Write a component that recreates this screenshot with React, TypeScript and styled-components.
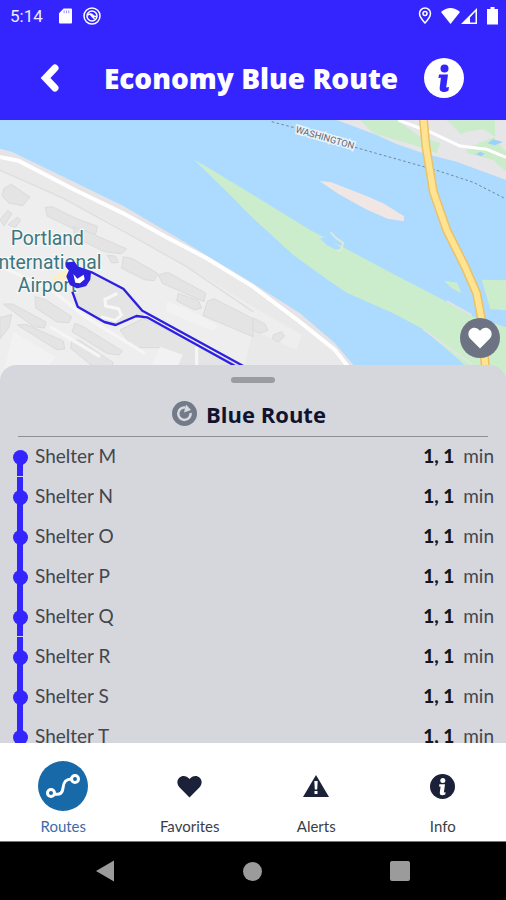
import React from "react";
import styled, { createGlobalStyle } from "styled-components";

const blue = "#3425ff";
const ink = "#1b2138";

const GlobalStyle = createGlobalStyle`
  *, *::before, *::after { box-sizing: border-box; }
  body { margin: 0; background: #000; font-family: Lato, "Open Sans", sans-serif; }
  button { border: 0; padding: 0; background: none; color: inherit; font: inherit; cursor: pointer; }
  svg { display: block; }
`;

const Screen = styled.div`
  display: flex;
  flex-direction: column;
  height: 100vh;
  overflow: hidden;
`;

const StatusBar = styled.div`
  display: flex;
  align-items: center;
  justify-content: space-between;
  flex: none;
  height: 32px;
  padding: 0 7px 0 10px;
  background: ${blue};
  color: #f0eeff;
  font: 400 17px/32px Roboto, sans-serif;
`;

const StatusGroup = styled.div<{ $gap: number }>`
  display: flex;
  align-items: center;
  gap: ${(p) => p.$gap}px;
`;

const Header = styled.header`
  display: grid;
  grid-template-columns: 1fr auto 1fr;
  align-items: center;
  flex: none;
  height: 88px;
  padding: 4px 42px 0 38px;
  background: ${blue};
  color: #fff;
`;

const Title = styled.h1`
  margin: 0;
  font: 800 28px/36px "Open Sans", sans-serif;
  white-space: nowrap;
`;

const HeaderButton = styled.button<{ $end?: boolean }>`
  justify-self: ${(p) => (p.$end ? "end" : "start")};
`;

const MapArea = styled.section`
  position: relative;
  flex: none;
  height: 264px;
  background: #acdbff;
`;

const MapDrawing = styled.svg`
  width: 100%;
  height: 100%;
`;

const FavoriteButton = styled.button`
  position: absolute;
  right: 6px;
  bottom: 26px;
  display: grid;
  place-items: center;
  width: 40px;
  height: 40px;
  border-radius: 50%;
  background: #6d7383;
`;

const Sheet = styled.section`
  position: relative;
  display: flex;
  flex-direction: column;
  flex: 1;
  min-height: 0;
  margin-top: -19px;
  border-radius: 16px 16px 0 0;
  background: #d5d7dd;
  overflow: hidden;
`;

const Handle = styled.div`
  flex: none;
  width: 44px;
  height: 6px;
  margin: 12px auto 0;
  border-radius: 3px;
  background: #9b9ca1;
`;

const RouteHeading = styled.div`
  display: flex;
  align-items: center;
  justify-content: center;
  gap: 9px;
  flex: none;
  height: 54px;
  margin: 0 18px;
  padding: 8px 8px 0 0;
  border-bottom: 1px solid #8a9098;
`;

const RouteName = styled.h2`
  margin: 0;
  color: #10132e;
  font: 700 22px/28px "Open Sans", sans-serif;
`;

const StopList = styled.ol`
  flex: 1;
  min-height: 0;
  margin: 0;
  padding: 0;
  list-style: none;
  overflow-y: auto;
  scrollbar-width: none;
`;

const Stop = styled.li`
  display: grid;
  grid-template-columns: 16px 1fr auto;
  align-items: center;
  column-gap: 7px;
  height: 40px;
  padding: 0 12px;
  color: #44464c;
  font-size: 19px;
  line-height: 24px;
`;

const Track = styled.span<{ $first: boolean; $seam: boolean }>`
  display: grid;
  place-items: center;
  height: 40px;
  background: linear-gradient(${blue}, ${blue}) no-repeat center ${(p) => (p.$first ? "20px" : "0")} / 6px
    ${(p) => (p.$seam ? (p.$first ? "19px" : "39px") : "40px")};
`;

const Dot = styled.span`
  width: 15px;
  height: 15px;
  border-radius: 50%;
  background: ${blue};
`;

const StopLabel = styled.span`
  padding-bottom: 2px;
`;

const Arrival = styled.span`
  display: flex;
  gap: 9px;
  padding-bottom: 2px;
`;

const Minutes = styled.strong`
  color: #15171f;
  font-weight: 900;
`;

const TabBar = styled.nav`
  display: grid;
  grid-template-columns: repeat(4, 1fr);
  flex: none;
  height: 99px;
  border-bottom: 1px solid #777;
  background: #fff;
`;

const Tab = styled.button<{ $active?: boolean }>`
  display: flex;
  flex-direction: column;
  align-items: center;
  justify-content: flex-start;
  gap: 5px;
  padding-top: 18px;
  color: ${(p) => (p.$active ? "#3d6ba8" : "#3c3e45")};
  font-size: 15px;
  line-height: 20px;
`;

const TabIcon = styled.span<{ $active?: boolean }>`
  display: grid;
  place-items: center;
  width: 50px;
  height: 50px;
  border-radius: 50%;
  background: ${(p) => (p.$active ? "#1769a8" : "transparent")};
`;

const SystemBar = styled.div`
  display: grid;
  grid-template-columns: repeat(3, 1fr);
  flex: none;
  height: 58px;
  padding: 0 32px;
  background: #000;
`;

const SystemButton = styled.button`
  display: grid;
  place-items: center;
`;

function Heart({ size, color }: { size: number; color: string }) {
  return (
    <svg width={size} height={size} viewBox="0 0 24 24" aria-hidden="true">
      <path
        fill={color}
        d="M12 22.500 2.300 12.700C-.3 10-.2 5.800 2.200 3.500 4.800 1 8.700 1.400 11 3.800l1 1 1-1C15.300 1.400 19.200 1 21.800 3.500c2.400 2.300 2.500 6.500-.1 9.200Z"
      />
    </svg>
  );
}

function InfoMark({ size, disc, mark }: { size: number; disc: string; mark: string }) {
  return (
    <svg width={size} height={size} viewBox="0 0 40 40" aria-hidden="true">
      <circle cx="20" cy="20" r="20" fill={disc} />
      <circle cx="20.500" cy="10.500" r="4" fill={mark} />
      <path fill={mark} d="M15 16.500h9l-1.800 13 2.800-.5-.6 3.700c-1.500.9-3.200 1.200-5 1.200-3 0-4-1.700-3.700-4.300l1.200-9.800-2.500.2Z" />
    </svg>
  );
}

function RouteMap() {
  return (
    <MapDrawing viewBox="0 0 1518 792" preserveAspectRatio="xMidYMin slice" role="img" aria-label="Route map">
      <rect width="1518" height="792" fill="#acdbff" />
      <path fill="#e6e5e8" d="M1010 0 1130 45 1190 72 1270 100 1370 125 1518 180V0Z" />
      <path fill="#cbeccb" d="M1080 0H1190L1260 50 1320 68 1310 100 1240 75 1170 55 1120 40ZM1340 0H1485V60L1518 95V155L1480 120 1400 98 1400 60Z" />
      <path fill="#e6e5e8" d="M1345 62 1400 35 1450 28 1485 50 1400 84Z" />
      <path fill="#9bd1fb" d="m1463 70 16-12 30 8-25 10Zm-35 33 12-8 14 6-10 8Z" />
      <path fill="none" stroke="#fff" strokeWidth="9" d="M1195 0 1290 36 1380 78 1460 88 1518 112" />

      <path fill="#e5e3e6" d="M0 86 35 95 190 170 370 258 560 370 759 490 900 580 1005 670 1060 735 1090 792H0Z" />
      <path fill="#e9e9e9" d="M0 115 60 125 300 250 500 352 759 500 880 590 990 680 1070 792H0Z" />
      <path fill="#eeeeee" d="M0 155 150 215 320 300 520 415 759 560 905 645 890 690 759 630 720 792H0Z" />
      <path fill="none" stroke="#fff" strokeWidth="12" d="M-5 110 55 122 225 210 370 280 500 352 620 415 759 500 895 602 1005 690 1075 780" />
      <path fill="none" stroke="#dedee0" strokeWidth="4" d="M0 150 190 235 400 350 560 440 759 575" />

      <g fill="#e4e4e5" stroke="#dbdbdd" strokeWidth="3" strokeLinejoin="round">
        <path d="m12 205 22-12 56 38-22 26-42-8-20-22Z" />
        <path d="m135 262 22-2 70 35 65 24-5 23-40-3-105-50Z" />
        <path d="m220 320 40 14 120 53-16 14-50-6-90-43Z" />
        <path d="m322 405 25 4 8 18-20 2Z" />
        <path d="m370 410 25 5 78 45-10 22-30-3-68-34Z" />
        <path d="m475 465 28-8 114 62-5 26-125-55Z" />
        <path d="m535 520 60 22 10 22-20 6-55-27Z" />
        <path d="m622 544 20-8 117 60v54l-150-63Z" />
        <path d="m0 300 22-28 14 8-24 38Zm40 2 12-10 10 8-16 22-22-8Z" />
        <path d="m105 530 30 8 80 52-8 18-35-2-65-42Z" />
        <path d="m10 552 28 0 100 54-5 18-32-4Z" />
        <path d="m52 615 26-2 112 50 4 24-24 2Z" />
        <path d="m225 610 24 10 118 73-10 12-36-5-105-65Z" />
        <path d="m215 662 22-2 103 68-10 25-38-3-80-65Z" />
        <path d="m0 592 35-8-8 38-27 35Z" />
        <path d="M260 450 370 510 430 585 350 610 310 605 235 560 220 490Z" />
        <path d="m360 630 70-35 330 163H470l70-40-60-35-80 0Z" />
        <path d="m759 594 35 17 10 20-24 9-21-10Z" />
        <path d="m820 645 24-10 10 13-18 18-18-9Z" />
      </g>
      <path fill="#f2f2f2" d="M40 635 165 710 130 768H8ZM500 545 570 570 652 615 642 633 500 575ZM480 680l68 24-20 50h-80Z" />
      <path fill="none" stroke="#f5f5f5" strokeWidth="10" d="M0 438 155 510 255 590 435 700M150 620 300 710M590 680V792" />
      <path fill="none" stroke="#f7f7f7" strokeWidth="9" d="M352 520 315 538 317 558 355 566 364 585 345 602 303 590" />
      <path fill="#fbefc8" d="m154 474 42-25 15 25-40 18Z" />

      <path fill="#ccedcb" d="M583 120 625 143 759 225 930 330 1007 370 1180 462 1330 540 1420 590 1518 622V792H1460L1360 705 1270 628 1180 580 1040 518 984 480 880 405 759 294 670 205Z" />
      <path fill="#acdbff" d="M990 350 1008 372 1025 385 1010 390 980 375 960 355Z" />
      <path fill="none" stroke="#dcebd8" strokeWidth="6" d="m992 337 17 18 20 14-5 20-14 4" />
      <path fill="#f0e7e5" d="m958 183 36 4 113 44 45 20 60 38-1 15-48-8-65-28-81-45Z" />
      <path fill="#ccedcb" d="m1332 482 40 6 12 32-28-15Zm113-3 73 2v90l-47-4Z" />
      <path fill="#acdbff" d="m1455 574 63-2v45l-30-10-38-8Z" />
      <path fill="none" stroke="#e6e3e6" strokeWidth="5" d="m1340 543 75 42M1270 628 1370 700 1425 740" />

      <path fill="none" stroke="#75889a" strokeWidth="3" strokeDasharray="8 7" d="M815 5 890 25M1065 82 1200 120 1310 151 1420 187 1518 237" />
      <text x="885" y="37" transform="rotate(16 885 37)" fill="#5b6974" stroke="#edf3f8" strokeWidth="9" paintOrder="stroke" fontFamily="Roboto" fontSize="28">WASHINGTON</text>
      <g fill="none" strokeLinejoin="round">
        <path stroke="#e9c266" strokeWidth="27" d="M1270-5 1278 80 1300 215 1340 330 1395 440 1430 520 1445 600 1460 792" />
        <path stroke="#ffe391" strokeWidth="18" d="M1270-5 1278 80 1300 215 1340 330 1395 440 1430 520 1445 600 1460 792" />
      </g>

      <g fill="#3c777f" stroke="#f7f7f7" strokeWidth="7" paintOrder="stroke" fontFamily="Roboto" fontSize="58" textAnchor="middle">
        <text x="142" y="375">Portland</text>
        <text x="142" y="446">International</text>
        <text x="142" y="517">Airport</text>
      </g>
      <path
        fill="none"
        stroke="#2e20e0"
        strokeWidth="7"
        strokeLinejoin="round"
        d="m215 437 60 20 95 49 57 66 303 166M217 515l16 45 80 46 34 9 62-27 32 4 263 145"
      />
      <path fill="#2e20e0" stroke="#2e20e0" strokeWidth="6" strokeLinejoin="round" d="m200 430 22-2 10 14 38 16-2 20-12 18-24 6-20-9-10-24 8-18-10-12Z" />
      <path fill="#fff" d="m220 462 12 14 19-12 3 14-14 12-14-2Z" />
    </MapDrawing>
  );
}

const stops = ["M", "N", "O", "P", "Q", "R", "S", "T"];

export default function App() {
  return (
    <Screen>
      <GlobalStyle />
      <StatusBar>
        <StatusGroup $gap={16}>
          <span>5:14</span>
          <StatusGroup $gap={11}>
            <svg width="13" height="16" viewBox="0 0 14 16" aria-hidden="true">
              <path fill="#fff" d="M5 0h8q1 0 1 1v14q0 1-1 1H1q-1 0-1-1V5Z" />
              <path stroke="#8f86ff" d="M5.500 2v3M8 2v3M10.500 2v3" />
            </svg>
            <svg width="18" height="18" viewBox="0 0 18 18" fill="none" stroke="#fff" aria-hidden="true">
              <circle cx="9" cy="9" r="8" strokeWidth="1.500" />
              <circle cx="9" cy="9" r="5" strokeWidth="1.500" />
              <path strokeWidth="1.500" d="M4.500 8q3.500-2 5 0t4 1.500M7 7l4.500 5" />
            </svg>
          </StatusGroup>
        </StatusGroup>
        <StatusGroup $gap={9}>
          <svg width="14" height="18" viewBox="1 0 14 18" fill="none" stroke="#fff" strokeWidth="1.500" aria-hidden="true">
            <path d="M8 16Q2.500 10 2.500 6.500a5.500 5.500 0 0 1 11 0Q13.500 10 8 16Z" />
            <circle cx="8" cy="6.500" r="2" />
          </svg>
          <StatusGroup $gap={1}>
            <svg width="19" height="18" viewBox="0 0 19 18" aria-hidden="true">
              <path fill="#fff" d="M0 5q9.500-8 19 0l-9.500 12Z" />
            </svg>
            <svg width="17" height="18" viewBox="0 0 17 18" aria-hidden="true">
              <path fill="#fff" fillRule="evenodd" d="M0 17 16 1v16Zm9-1.500h5.500v-11L9 10.500Z" />
            </svg>
          </StatusGroup>
          <svg width="12" height="18" viewBox="0 0 12 18" aria-hidden="true">
            <path fill="#fff" d="M3.500 0h4v2H11v15.500H0V2h3.500Z" />
          </svg>
        </StatusGroup>
      </StatusBar>

      <Header>
        <HeaderButton aria-label="Back">
          <svg width="24" height="32" viewBox="0 0 24 32" fill="none" aria-hidden="true">
            <path stroke="#fff" strokeWidth="7" strokeLinecap="round" d="M17 6 7.500 16l9.500 10" />
          </svg>
        </HeaderButton>
        <Title>Economy Blue Route</Title>
        <HeaderButton $end aria-label="Route information">
          <InfoMark size={40} disc="#fff" mark={blue} />
        </HeaderButton>
      </Header>

      <MapArea>
        <RouteMap />
        <FavoriteButton aria-label="Add to favorites">
          <Heart size={24} color="#fff" />
        </FavoriteButton>
      </MapArea>

      <Sheet>
        <Handle />
        <RouteHeading>
          <svg width="25" height="25" viewBox="0 0 25 25" aria-hidden="true">
            <circle cx="12.500" cy="12.500" r="12.500" fill="#737b88" />
            <path fill="none" stroke="#d9dbe0" strokeWidth="2.500" d="M13 6.500A6.200 6.200 0 1 0 18.600 12" />
            <path fill="#d9dbe0" d="m14 3.500 5 5.500-7 2.500Z" />
          </svg>
          <RouteName>Blue Route</RouteName>
        </RouteHeading>
        <StopList>
          {stops.map((stop, index) => (
            <Stop key={stop}>
              <Track $first={index === 0} $seam={stop === "M" || stop === "Q"}>
                <Dot />
              </Track>
              <StopLabel>Shelter {stop}</StopLabel>
              <Arrival>
                <Minutes>1, 1</Minutes>
                <span>min</span>
              </Arrival>
            </Stop>
          ))}
        </StopList>
      </Sheet>

      <TabBar>
        <Tab $active aria-current="page">
          <TabIcon $active>
            <svg width="36" height="26" viewBox="0 0 36 26" fill="none" stroke="#fff" strokeWidth="3" aria-hidden="true">
              <circle cx="6" cy="20" r="3.500" />
              <circle cx="30" cy="6" r="3.500" />
              <path d="M9.500 21c6 1 8-1 8.500-6s2-9 8.500-9" />
            </svg>
          </TabIcon>
          Routes
        </Tab>
        <Tab>
          <TabIcon>
            <Heart size={25} color={ink} />
          </TabIcon>
          Favorites
        </Tab>
        <Tab>
          <TabIcon>
            <svg width="28" height="24" viewBox="0 0 28 24" aria-hidden="true">
              <path fill={ink} d="M14 1 27 23H1Z" />
              <path fill="#fff" d="M12.300 7h3.400l-.5 8.500h-2.400Zm.2 10h3v3h-3Z" />
            </svg>
          </TabIcon>
          Alerts
        </Tab>
        <Tab>
          <TabIcon>
            <InfoMark size={25} disc={ink} mark="#fff" />
          </TabIcon>
          Info
        </Tab>
      </TabBar>

      <SystemBar>
        <SystemButton aria-label="System back">
          <svg width="19" height="22" viewBox="0 0 19 22" aria-hidden="true">
            <path fill="#9b9b9b" d="M0 11 18 .5v21Z" />
          </svg>
        </SystemButton>
        <SystemButton aria-label="Home">
          <svg width="19" height="19" viewBox="0 0 19 19" aria-hidden="true">
            <circle cx="9.500" cy="9.500" r="9.500" fill="#9b9b9b" />
          </svg>
        </SystemButton>
        <SystemButton aria-label="Recent apps">
          <svg width="20" height="20" viewBox="0 0 20 20" aria-hidden="true">
            <rect width="20" height="20" rx="2" fill="#9b9b9b" />
          </svg>
        </SystemButton>
      </SystemBar>
    </Screen>
  );
}
